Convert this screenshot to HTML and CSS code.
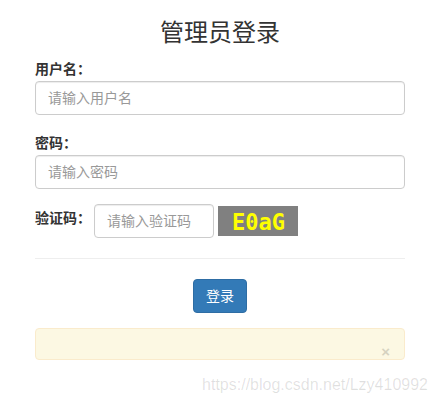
FILE: index.html
```html
<!DOCTYPE html>
<html lang="zh-CN">
<head>
    <meta charset="UTF-8">
    <meta name="viewport" content="width=device-width, initial-scale=1.0">
    <title>管理员登录</title>
    <link rel="stylesheet" href="styles.css">
</head>
<body>
    <div class="container">
        <h3 class="title">管理员登录</h3>

        <div class="form-group">
            <label for="username">用户名：</label>
            <input type="text" class="form-control" id="username" placeholder="请输入用户名">
        </div>

        <div class="form-group">
            <label for="password">密码：</label>
            <input type="password" class="form-control" id="password" placeholder="请输入密码">
        </div>

        <div class="form-inline">
            <label for="vcode">验证码：</label>
            <input type="text" class="form-control vcode-input" id="vcode" placeholder="请输入验证码">
            <div class="vcode-img"><span>E0aG</span></div>
        </div>

        <hr>

        <div class="btn-row">
            <button class="btn-primary">登录</button>
        </div>

        <div class="alert-warning">
            <span class="close">&times;</span>
        </div>
    </div>

    <div class="watermark">https://blog.csdn.net/Lzy410992</div>
</body>
</html>
```

FILE: styles.css
```css
* {
    margin: 0;
    padding: 0;
    box-sizing: border-box;
}

body {
    font-family: "Liberation Sans", "Noto Sans CJK SC", sans-serif;
    font-size: 14px;
    line-height: 20px;
    color: #333;
    background: #fff;
}

.container {
    width: 370px;
    margin-left: 35px;
    padding-top: 20px;
}

.title {
    text-align: center;
    font-size: 24px;
    line-height: 26px;
    font-weight: normal;
    margin-bottom: 13px;
}

.form-group {
    margin-bottom: 18px;
}

.form-group label {
    display: block;
    font-weight: bold;
    margin-bottom: 2px;
}

.form-control {
    display: block;
    width: 100%;
    height: 34px;
    padding: 6px 12px;
    font-family: inherit;
    font-size: 14px;
    color: #555;
    border: 1px solid #ccc;
    border-radius: 4px;
    box-shadow: inset 0 1px 1px rgba(0, 0, 0, 0.075);
}

.form-control::placeholder {
    color: #999;
}

.form-inline {
    display: flex;
    align-items: center;
    margin-top: -3px;
}

.form-inline label {
    font-weight: bold;
    width: 59px;
    margin-top: -7px;
}

.vcode-input {
    width: 120px;
}

.vcode-img {
    width: 80px;
    height: 30px;
    margin-left: 4px;
    background: #808080;
    display: flex;
    align-items: center;
    justify-content: center;
}

.vcode-img span {
    font-family: "DejaVu Sans Mono", monospace;
    font-weight: bold;
    font-size: 22px;
    line-height: 22px;
    color: #ffff00;
    margin-top: 3px;
    margin-left: 1px;
    display: inline-block;
    transform: scaleY(1.05);
}

hr {
    border: 0;
    border-top: 1px solid #eee;
    margin: 20px 0;
}

.btn-row {
    text-align: center;
}

.btn-primary {
    padding: 6px 12px;
    font-family: inherit;
    font-size: 14px;
    line-height: 20px;
    color: #fff;
    background: #337ab7;
    border: 1px solid #2e6da4;
    border-radius: 4px;
    cursor: pointer;
}

.alert-warning {
    margin-top: 15px;
    height: 32px;
    background: #fcf8e3;
    border: 1px solid #faebcc;
    border-radius: 4px;
    display: flex;
    justify-content: flex-end;
    align-items: flex-end;
    padding-right: 14px;
}

.close {
    font-size: 15px;
    line-height: 15px;
    font-weight: bold;
    color: #000;
    opacity: 0.15;
}

.watermark {
    font-family: "Liberation Sans", sans-serif;
    font-size: 16px;
    line-height: 18px;
    color: rgba(0, 0, 0, 0.12);
    text-align: right;
    padding-right: 10px;
    margin-top: 16px;
}
```
